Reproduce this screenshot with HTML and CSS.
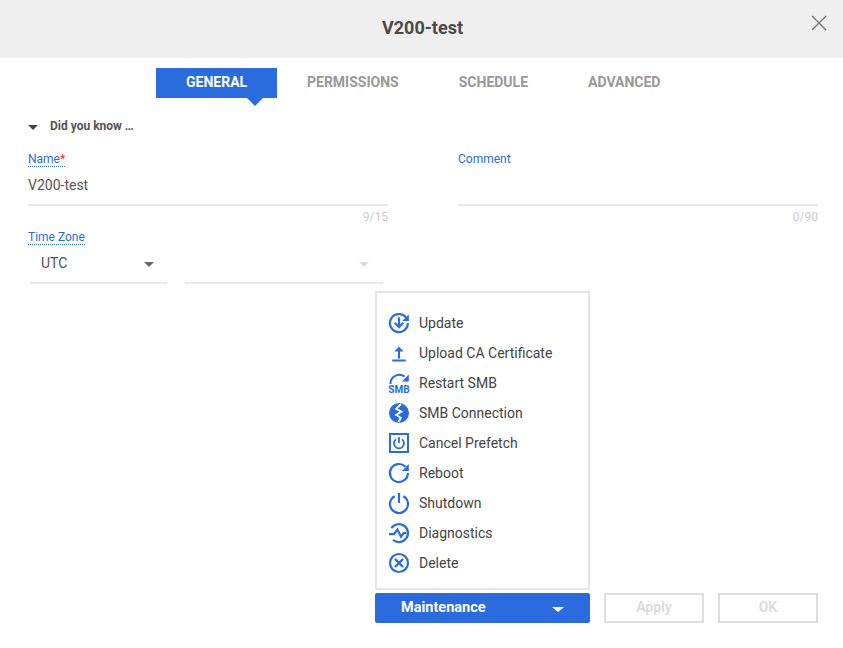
FILE: index.html
```html
<!DOCTYPE html>
<html lang="en">
<head>
<meta charset="utf-8">
<title>V200-test</title>
<link rel="stylesheet" href="styles.css">
</head>
<body>
<div class="dialog">
  <header class="title-bar">
    <h1 class="title">V200-test</h1>
    <button class="close" aria-label="Close">
      <svg width="16" height="16" viewBox="0 0 16 16"><path d="M1 1L15 15M15 1L1 15" fill="none" stroke="#777" stroke-width="1.4"/></svg>
    </button>
  </header>
  <nav class="tabs">
    <div class="tab active">GENERAL</div>
    <div class="tab">PERMISSIONS</div>
    <div class="tab">SCHEDULE</div>
    <div class="tab">ADVANCED</div>
  </nav>
  <main class="form">
    <div class="tip"><span class="tri tri-dark"></span><span>Did you know …</span></div>
    <div class="field-row">
      <div class="field">
        <label class="label">Name<span class="req">*</span></label>
        <div class="input">V200-test</div>
        <div class="count">9/15</div>
      </div>
      <div class="field">
        <label class="label label-plain">Comment</label>
        <div class="input"></div>
        <div class="count">0/90</div>
      </div>
    </div>
    <label class="label tz-label">Time Zone</label>
    <div class="selects">
      <div class="select sel-a"><span>UTC</span><span class="tri tri-grey"></span></div>
      <div class="select sel-b"><span></span><span class="tri tri-light"></span></div>
    </div>
  </main>
  <footer class="actions">
    <div class="maint">
      <div class="menu">
        <div class="item">
          <svg class="ico" viewBox="0 0 20 20"><path d="M17.2 4.8A9 9 0 1 0 18.9 10" fill="none" stroke="#2a6bdd" stroke-width="2.2"/><path d="M19.8 1.4V8H13.2Z" fill="#2a6bdd"/><path d="M10 4.6V14M5.8 9.8L10 14.2L14.2 9.8" fill="none" stroke="#2a6bdd" stroke-width="2.2"/></svg>
          <span>Update</span>
        </div>
        <div class="item">
          <svg class="ico" viewBox="0 0 20 20"><path d="M10 15.5V5.5" fill="none" stroke="#2a6bdd" stroke-width="2"/><path d="M10 3.6L14.6 8.6H5.4Z" fill="#2a6bdd"/><path d="M3.2 17.5H16.8" fill="none" stroke="#2a6bdd" stroke-width="2"/></svg>
          <span>Upload CA Certificate</span>
        </div>
        <div class="item">
          <svg class="ico" viewBox="0 0 20 20"><path d="M1.4 11A9 9 0 0 1 15.6 3.6" fill="none" stroke="#2a6bdd" stroke-width="2"/><path d="M19.8 1.6V8.6H13Z" fill="#2a6bdd"/><text class="smb" x="10" y="20" text-anchor="middle">SMB</text></svg>
          <span>Restart SMB</span>
        </div>
        <div class="item">
          <svg class="ico" viewBox="0 0 20 20"><circle cx="10" cy="10" r="10" fill="#2a6bdd"/><path d="M11.8 1L7.2 5.8L12.4 8.6L7.2 12L11.8 14.8L9.4 19" fill="none" stroke="#fff" stroke-width="1.9"/></svg>
          <span>SMB Connection</span>
        </div>
        <div class="item">
          <svg class="ico" viewBox="0 0 20 20"><rect x="1" y="1" width="18" height="18" fill="none" stroke="#2a6bdd" stroke-width="2"/><path d="M7 6.4A5 5 0 1 0 13 6.4" fill="none" stroke="#2a6bdd" stroke-width="1.8"/><path d="M10 4V10" fill="none" stroke="#2a6bdd" stroke-width="1.8"/></svg>
          <span>Cancel Prefetch</span>
        </div>
        <div class="item">
          <svg class="ico" viewBox="0 0 20 20"><path d="M16.4 3.8A9 9 0 1 0 18.9 10" fill="none" stroke="#2a6bdd" stroke-width="2.2"/><path d="M19.8 1V8H12.8Z" fill="#2a6bdd"/></svg>
          <span>Reboot</span>
        </div>
        <div class="item">
          <svg class="ico" viewBox="0 0 20 20"><path d="M5.6 3.2A9 9 0 1 0 14.4 3.2" fill="none" stroke="#2a6bdd" stroke-width="2.2"/><path d="M10 0V10" fill="none" stroke="#2a6bdd" stroke-width="2.2"/></svg>
          <span>Shutdown</span>
        </div>
        <div class="item">
          <svg class="ico" viewBox="0 0 20 20"><path d="M2.4 5.2A9 9 0 1 1 4 16.8" fill="none" stroke="#2a6bdd" stroke-width="2.2"/><path d="M0 11.2H5L8.4 6.6L12 13.6L14.6 10H17.4" fill="none" stroke="#2a6bdd" stroke-width="2.2"/></svg>
          <span>Diagnostics</span>
        </div>
        <div class="item">
          <svg class="ico" viewBox="0 0 20 20"><circle cx="10" cy="10" r="9" fill="none" stroke="#2a6bdd" stroke-width="2.2"/><path d="M6 6L14 14M14 6L6 14" fill="none" stroke="#2a6bdd" stroke-width="2.4"/></svg>
          <span>Delete</span>
        </div>
      </div>
      <button class="btn-primary"><span class="btn-text">Maintenance</span><span class="tri tri-white"></span></button>
    </div>
    <button class="btn-off">Apply</button>
    <button class="btn-off">OK</button>
  </footer>
</div>
</body>
</html>
```
FILE: styles.css
```css
* { box-sizing: border-box; }
html, body { margin: 0; padding: 0; }
body { font-family: Roboto, "Liberation Sans", sans-serif; background: #fff; color: #555; }
.dialog { width: 843px; height: 648px; display: flex; flex-direction: column; overflow: hidden; }

.title-bar { height: 58px; flex: none; background: #efefef; display: flex; align-items: center; justify-content: center; position: relative; }
.title { margin: 0 0 0 2px; font-size: 18px; font-weight: 700; color: #4a4a4a; line-height: 1; position: relative; top: -1px; }
.close { position: absolute; top: 15px; right: 16px; width: 16px; height: 16px; padding: 0; border: 0; background: none; display: block; }
.close svg { display: block; }

.tabs { display: flex; justify-content: flex-start; padding: 10px 0 0 156px; flex: none; }
.tab { height: 30px; line-height: 29px; padding: 0 30px; font-size: 14px; font-weight: 700; color: #999; position: relative; }
.tab.active { background: #2a6bdd; color: #fff; width: 121px; }
.tab.active::after { content: ""; position: absolute; left: 91px; top: 30px; border-style: solid; border-width: 8px 8px 0 8px; border-color: #2a6bdd transparent transparent transparent; }

.form { padding: 0 25px 0 28px; flex: 1; min-height: 0; }
.tip { display: flex; align-items: center; gap: 12px; margin-top: 20px; height: 16px; font-size: 12px; font-weight: 700; color: #555; }

.tri { display: inline-block; width: 0; height: 0; border-style: solid; border-color: transparent; }
.tri-dark { border-width: 5px 5px 0 5px; border-top-color: #444; margin-top: 2px; }
.tri-grey { border-width: 5px 5px 0 5px; border-top-color: #666; margin-top: 3px; }
.tri-light { border-width: 5px 5px 0 5px; border-top-color: #ddd; margin-top: 3px; }
.tri-white { border-width: 5px 6px 0 6px; border-top-color: #fff; margin-top: 2px; }

.field-row { display: flex; gap: 70px; margin-top: 14px; }
.field { width: 360px; }
.label { display: inline-block; font-size: 12px; line-height: 14px; color: #2a6bdd; border-bottom: 1px dotted #2a6bdd; }
.label-plain { border-bottom-color: transparent; }
.req { color: #f22; }
.input { height: 39px; margin-top: 0; border-bottom: 2px solid #e8e8e8; font-size: 14px; line-height: 37px; color: #555; }
.count { height: 16px; margin-top: 3px; font-size: 12px; line-height: 16px; text-align: right; color: #ccc; }

.tz-label { display: table; margin-top: 5px; }
.selects { display: flex; margin-left: 2px; gap: 18px; }
.select { height: 39px; border-bottom: 2px solid #e8e8e8; font-size: 14px; display: flex; align-items: center; justify-content: space-between; color: #555; padding-bottom: 1px; }
.sel-a { width: 137px; padding-left: 11px; padding-right: 13px; }
.sel-b { width: 198px; padding-right: 14px; }

.actions { flex: none; display: flex; gap: 14px; padding: 0 25px 25px 375px; }
.maint { position: relative; width: 215px; }
.menu { position: absolute; left: 0; bottom: 33px; width: 215px; height: 299px; border: 2px solid #e5e5e5; background: #fff; padding: 15px 0 0 12px; }
.item { height: 30px; display: flex; align-items: center; gap: 10px; font-size: 14px; color: #444; }
.ico { width: 20px; height: 20px; flex: none; overflow: visible; }
.smb { font-family: Roboto, "Liberation Sans", sans-serif; font-size: 10px; font-weight: 700; fill: #2a6bdd; }

.btn-primary { width: 215px; height: 30px; background: #2a6bdd; border: 0; border-radius: 2px; color: #fff; font-family: inherit; font-size: 14px; font-weight: 700; display: flex; align-items: center; justify-content: space-between; padding: 0 26px; }
.btn-text { font-size: 14.5px; position: relative; top: -1px; }
.btn-off { width: 100px; height: 30px; background: #fff; border: 2px solid #ddd; color: #ddd; font-family: inherit; font-size: 14px; font-weight: 700; padding: 0 0 2px; }
```
